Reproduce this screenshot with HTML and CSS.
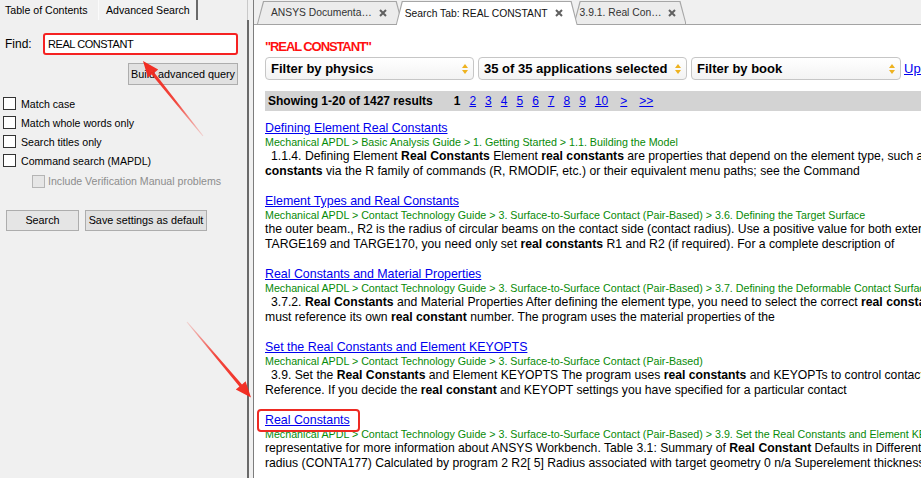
FILE: index.html
```html
<!DOCTYPE html>
<html>
<head>
<meta charset="utf-8">
<title>ANSYS Help - Advanced Search</title>
<link rel="stylesheet" href="styles.css">
</head>
<body>
<div class="app">
  <aside class="left">
    <div class="ltabs">
      <div class="ltab">Table of Contents</div>
      <div class="ltab active">Advanced Search</div>
      <div class="ltab-fill"></div>
    </div>
    <div class="lpanel">
      <div class="find-row">
        <span class="find-label">Find:</span>
        <div class="find">REAL CONSTANT</div>
      </div>
      <div class="build-row"><div class="btn build">Build advanced query</div></div>
      <div class="opts">
        <div class="opt"><span class="cb"></span>Match case</div>
        <div class="opt"><span class="cb"></span>Match whole words only</div>
        <div class="opt"><span class="cb"></span>Search titles only</div>
        <div class="opt"><span class="cb"></span>Command search (MAPDL)</div>
        <div class="opt disabled"><span class="cb"></span>Include Verification Manual problems</div>
      </div>
      <div class="btn-row">
        <div class="btn search">Search</div>
        <div class="btn save">Save settings as default</div>
      </div>
    </div>
  </aside>

  <main class="right">
    <div class="rtabs">
      <div class="tab t1"><span>ANSYS Documenta…</span><svg class="x" viewBox="0 0 8 8"><path d="M1 1L7 7M7 1L1 7"/></svg></div>
      <div class="tab t2 active"><span>Search Tab: REAL CONSTANT</span><svg class="x" viewBox="0 0 8 8"><path d="M1 1L7 7M7 1L1 7"/></svg></div>
      <div class="tab t3"><span>3.9.1. Real Con…</span><svg class="x" viewBox="0 0 8 8"><path d="M1 1L7 7M7 1L1 7"/></svg></div>
    </div>
    <div class="content">
      <div class="query">"REAL CONSTANT"</div>
      <div class="filters">
        <div class="sel w1"><span>Filter by physics</span><svg class="arr" viewBox="0 0 6 10"><path d="M0 4L3 0L6 4Z M0 6L3 10L6 6Z"/></svg></div>
        <div class="sel w2"><span>35 of 35 applications selected</span><svg class="arr" viewBox="0 0 6 10"><path d="M0 4L3 0L6 4Z M0 6L3 10L6 6Z"/></svg></div>
        <div class="sel w3"><span>Filter by book</span><svg class="arr" viewBox="0 0 6 10"><path d="M0 4L3 0L6 4Z M0 6L3 10L6 6Z"/></svg></div>
        <a class="up" href="#">Update</a>
      </div>
      <div class="bar">
        <span class="showing">Showing 1-20 of 1427 results</span>
        <div class="pages">
          <b>1</b><a href="#">2</a><a href="#">3</a><a href="#">4</a><a href="#">5</a><a href="#">6</a><a href="#">7</a><a href="#">8</a><a href="#">9</a><a href="#">10</a><a class="next" href="#">&gt;</a><a class="last" href="#">&gt;&gt;</a>
        </div>
      </div>
      <div class="results">
        <div class="result">
          <a class="rtitle" href="#">Defining Element Real Constants</a>
          <div class="crumb">Mechanical APDL &gt; Basic Analysis Guide &gt; 1. Getting Started &gt; 1.1. Building the Model</div>
          <div class="line ind">1.1.4. Defining Element <b>Real Constants</b> Element <b>real constants</b> are properties that depend on the element type, such as cross-sectional properties of a beam element. You specify <b>real</b></div>
          <div class="line"><b>constants</b> via the R family of commands (R, RMODIF, etc.) or their equivalent menu paths; see the Command</div>
        </div>
        <div class="result">
          <a class="rtitle" href="#">Element Types and Real Constants</a>
          <div class="crumb">Mechanical APDL &gt; Contact Technology Guide &gt; 3. Surface-to-Surface Contact (Pair-Based) &gt; 3.6. Defining the Target Surface</div>
          <div class="line">the outer beam., R2 is the radius of circular beams on the contact side (contact radius). Use a positive value for both external and internal contact. For</div>
          <div class="line">TARGE169 and TARGE170, you need only set <b>real constants</b> R1 and R2 (if required). For a complete description of</div>
        </div>
        <div class="result">
          <a class="rtitle" href="#">Real Constants and Material Properties</a>
          <div class="crumb">Mechanical APDL &gt; Contact Technology Guide &gt; 3. Surface-to-Surface Contact (Pair-Based) &gt; 3.7. Defining the Deformable Contact Surface</div>
          <div class="line ind">3.7.2. <b>Real Constants</b> and Material Properties After defining the element type, you need to select the correct <b>real constant</b> set. Each contact pair</div>
          <div class="line">must reference its own <b>real constant</b> number. The program uses the material properties of the</div>
        </div>
        <div class="result">
          <a class="rtitle" href="#">Set the Real Constants and Element KEYOPTS</a>
          <div class="crumb">Mechanical APDL &gt; Contact Technology Guide &gt; 3. Surface-to-Surface Contact (Pair-Based)</div>
          <div class="line ind">3.9. Set the <b>Real Constants</b> and Element KEYOPTS The program uses <b>real constants</b> and KEYOPTs to control contact behavior. See the Element</div>
          <div class="line">Reference. If you decide the <b>real constant</b> and KEYOPT settings you have specified for a particular contact</div>
        </div>
        <div class="result">
          <a class="rtitle" href="#">Real Constants</a>
          <div class="crumb">Mechanical APDL &gt; Contact Technology Guide &gt; 3. Surface-to-Surface Contact (Pair-Based) &gt; 3.9. Set the Real Constants and Element KEYOPTS</div>
          <div class="line">representative for more information about ANSYS Workbench. Table 3.1: Summary of <b>Real Constant</b> Defaults in Different Elements</div>
          <div class="line">radius (CONTA177) Calculated by program 2 R2[ 5] Radius associated with target geometry 0 n/a Superelement thickness</div>
        </div>
      </div>
    </div>
  </main>
</div>

<svg class="annot" viewBox="0 0 921 478" width="921" height="478">
  <defs>
    <linearGradient id="g1" gradientUnits="userSpaceOnUse" x1="203" y1="136" x2="143" y2="61">
      <stop offset="0" stop-color="#f22a1f" stop-opacity="0.15"/>
      <stop offset="0.45" stop-color="#f22a1f" stop-opacity="0.85"/>
      <stop offset="1" stop-color="#f22a1f"/>
    </linearGradient>
    <linearGradient id="g2" gradientUnits="userSpaceOnUse" x1="187" y1="322" x2="251" y2="397.5">
      <stop offset="0" stop-color="#f22a1f" stop-opacity="0.15"/>
      <stop offset="0.45" stop-color="#f22a1f" stop-opacity="0.85"/>
      <stop offset="1" stop-color="#f22a1f"/>
    </linearGradient>
  </defs>
  <polygon fill="url(#g1)" points="203.4,135.7 154.4,72.8 158.2,69.6 143,61 147.9,77.6 151.6,74.6 202.6,136.3"/>
  <polygon fill="url(#g2)" points="187.4,321.7 242.0,384.5 245.6,381.2 251,397.5 235.8,389.4 239.4,386.6 186.6,322.3"/>
  <rect x="258" y="410" width="101" height="21" rx="3" ry="3" fill="none" stroke="#ee2a22" stroke-width="2"/>
</svg>
</body>
</html>
```

FILE: styles.css
```css
* { box-sizing: border-box; }
html, body { margin: 0; padding: 0; }
body {
  width: 921px;
  height: 478px;
  overflow: hidden;
  position: relative;
  background: #f0f0f0;
  font-family: "Liberation Sans", Arial, sans-serif;
  color: #000;
}
.app { display: flex; height: 478px; }

/* ---------- left pane ---------- */
.left {
  width: 249px;
  flex: none;
  display: flex;
  flex-direction: column;
  font-size: 10.6px;
}
.ltabs { height: 20px; flex: none; display: flex; }
.ltab {
  height: 20px;
  line-height: 20px;
  width: 98px;
  padding-left: 5px;
  white-space: nowrap;
  color: #000;
}
.ltab.active {
  width: 100px;
  padding-left: 7px;
  border-left: 1px solid #fbfbfb;
  border-right: 2px solid #6a6a6a;
  background: #f2f2f2;
}
.ltab-fill { flex: 1; border-right: 1px solid #c9c9c9; margin-right: 1px; }
.lpanel {
  flex: 1;
  border-right: 2px solid #6a6a6a;
  padding: 13px 9px 0 3px;
}
.find-row { display: flex; align-items: center; height: 22px; }
.find-label { width: 40px; padding-left: 2px; font-size: 12px; }
.find {
  width: 195px;
  height: 22px;
  border: 2px solid #f52222;
  border-radius: 3px;
  background: #fff;
  padding-left: 3px;
  line-height: 18px;
  font-size: 11px;
  letter-spacing: -0.45px;
}
.build-row { display: flex; justify-content: flex-end; margin-top: 8px; }
.btn {
  height: 22px;
  line-height: 20px;
  border: 1px solid #adadad;
  background: #e1e1e1;
  text-align: center;
  font-size: 10.8px;
  white-space: nowrap;
}
.build { width: 110px; }
.opts { margin-top: 9px; }
.opt { display: flex; align-items: center; height: 19px; white-space: nowrap; }
.cb {
  width: 13px;
  height: 13px;
  flex: none;
  border: 1px solid #333;
  background: #fff;
  margin-right: 5px;
}
.opt.disabled { height: 22px; padding-left: 29px; color: #8d8d8d; }
.opt.disabled .cb {
  border: 1px solid #b5b5b5;
  background: #e6e6e6;
  margin-right: 3px;
}
.btn-row { display: flex; gap: 6px; margin-top: 18px; padding-left: 3px; }
.btn-row .btn { height: 21px; line-height: 19px; }
.search { width: 73px; background: #e5e5e5; }
.save { width: 122px; }

/* ---------- right pane ---------- */
.right {
  flex: 1;
  min-width: 0;
  margin-left: 4px;
  border-left: 1px solid #7d7d7d;
  display: flex;
  flex-direction: column;
}
.rtabs {
  height: 25px;
  flex: none;
  display: flex;
  align-items: flex-end;
  border-bottom: 1px solid #a3a3a3;
  padding-left: 3px;
  background: #f0f0f0;
}
.tab {
  position: relative;
  z-index: 1;
  height: 23px;
  display: flex;
  align-items: center;
  font-size: 10.3px;
  color: #333;
  white-space: nowrap;
}
.tab::before,
.tab::after {
  content: "";
  position: absolute;
  clip-path: polygon(0 100%, 6px 0, calc(100% - 6px) 0, 100% 100%);
  z-index: -1;
}
.tab::before { inset: 0; background: #a6a6a6; }
.tab::after { inset: 1px 1px 0 1px; background: #ececec; }
.tab .x { width: 8px; height: 8px; margin-left: 7px; flex: none; }
.tab .x path { stroke: #606060; stroke-width: 2; fill: none; }
.t1 { padding: 0 16px 0 14px; margin-right: -7px; }
.t2 { padding: 0 15px 0 9px; margin-right: -4px; }
.t3 { padding: 0 10px 0 6px; }
.tab.active { z-index: 3; height: 24px; margin-bottom: -1px; color: #111; }
.tab.active::after { background: #fff; }

.content {
  flex: 1;
  min-width: 0;
  background: #fff;
  padding: 14px 0 0 11px;
  overflow: hidden;
}
.query {
  height: 16px;
  line-height: 16px;
  color: #ff1010;
  font-weight: bold;
  font-size: 13px;
  letter-spacing: -1.1px;
}
.filters { display: flex; align-items: center; gap: 4px; margin-top: 2px; height: 23px; }
.sel {
  flex: none;
  height: 23px;
  border: 1px solid #c6c6c6;
  border-radius: 4px;
  background: linear-gradient(#ffffff, #f3f3f3);
  display: flex;
  align-items: center;
  justify-content: space-between;
  padding: 0 5px 0 5px;
  font-weight: bold;
  font-size: 13px;
  white-space: nowrap;
}
.w1 { width: 209px; }
.w2 { width: 209px; }
.w3 { width: 210px; }
.arr { width: 6px; height: 10px; flex: none; }
.arr path { fill: #eeb21f; }
.up { font-size: 13px; color: #0000ee; white-space: nowrap; margin-left: -1px; }

.bar {
  margin-top: 11px;
  height: 20px;
  background: #d3d3d3;
  display: flex;
  align-items: center;
  padding-left: 3px;
  font-size: 12px;
  white-space: nowrap;
}
.showing { font-weight: bold; }
.pages { display: flex; gap: 9px; margin-left: 21px; }
.pages a { color: #0000ee; }
.pages .next { margin-left: 3px; }
.pages .last { margin-left: 3px; }

.results { margin-top: 10px; }
.result { margin-bottom: 15px; }
.rtitle {
  display: block;
  height: 14px;
  line-height: 14px;
  font-size: 12.4px;
  color: #0000ee;
  white-space: nowrap;
}
.crumb {
  height: 14px;
  line-height: 14px;
  font-size: 10.7px;
  color: #078a07;
  white-space: nowrap;
}
.line {
  height: 15px;
  line-height: 15px;
  font-size: 12.2px;
  white-space: nowrap;
}
.line.ind { text-indent: 6px; }

/* ---------- annotations ---------- */
.annot {
  position: absolute;
  left: 0;
  top: 0;
  pointer-events: none;
}
```
